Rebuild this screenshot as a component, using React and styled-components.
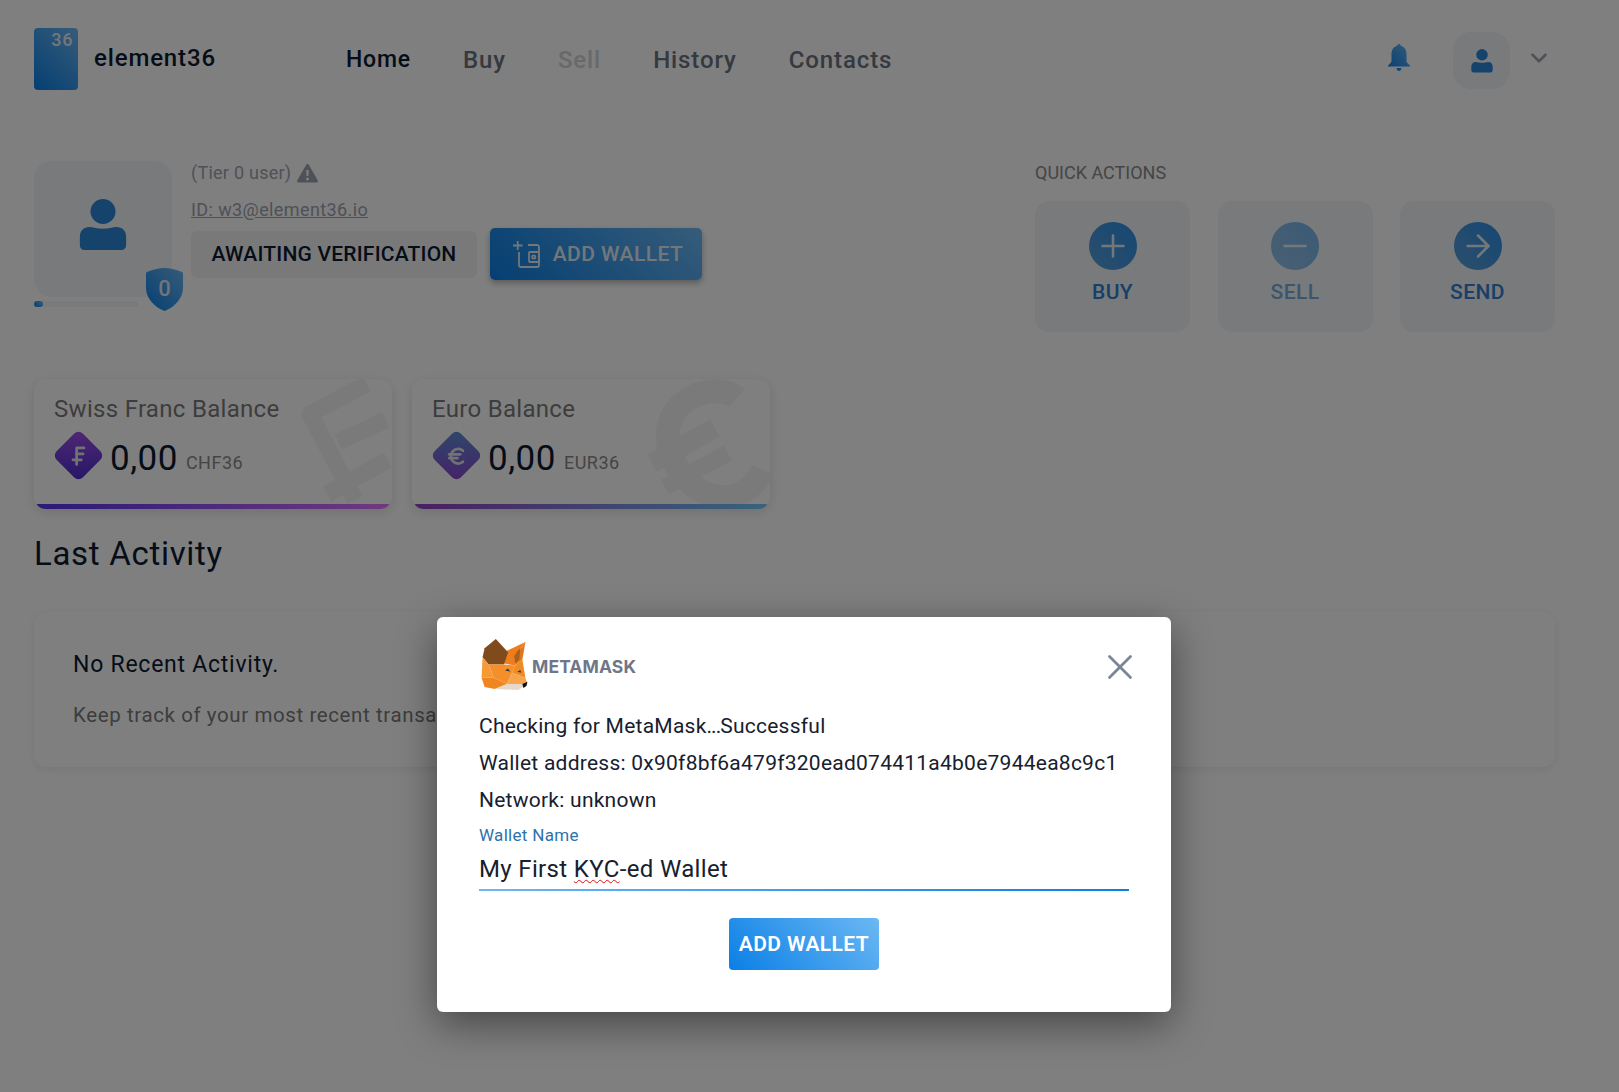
import React from "react";
import styled, {createGlobalStyle} from "styled-components";
import {Plus, Minus, ArrowRight, ChevronDown, SwissFranc, Euro, X} from "lucide-react";

const GlobalStyle = createGlobalStyle`
  html, body {
    margin: 0;
    padding: 0;
    background: #fff;
    font-family: Roboto, "Noto Sans", sans-serif;
  }
  * { box-sizing: border-box; }
`

const primary = "linear-gradient(45deg, #0a7fe6 0%, #6cb8f3 100%)"
const tint = "#f0f5f8"

const Page = styled.div`
  position: relative;
  width: 1619px;
  height: 1092px;
  padding: 28px 64px 0 34px;
  overflow: hidden;
  color: #0b1a33;
`

const Header = styled.header`
  display: flex;
  align-items: flex-start;
  height: 131px;
`

const Brand = styled.div`
  display: flex;
  gap: 16px;
  width: 312px;
`

const LogoMark = styled.div`
  width: 44px;
  height: 62px;
  border-radius: 4px;
  background: ${primary};
  color: #e8eef3;
  font-size: 18px;
  font-weight: 500;
  letter-spacing: .6px;
  line-height: 14px;
  text-align: right;
  padding: 5px 5px 0 0;
`

const BrandName = styled.div`
  font-size: 24px;
  font-weight: 500;
  letter-spacing: .85px;
  line-height: 28px;
  margin-top: 16px;
`

const Nav = styled.nav`
  display: flex;
  gap: 52px;
  margin-top: 18px;
`

const NavItem = styled.a`
  font-size: ${p => p.$active ? "23px" : "24px"};
  line-height: 28px;
  font-weight: 500;
  letter-spacing: ${p => p.$active ? ".8px" : ".9px"};
  color: ${p => p.$active ? "#0b1a33" : p.$disabled ? "#cfd3d8" : "#6b7280"};
`

const HeaderRight = styled.div`
  margin-left: auto;
  display: flex;
  align-items: center;
  margin-top: 4px;
  margin-right: 3px;
`

const Bell = styled.svg`
  width: 26px;
  height: 28px;
  margin-right: 41px;
  margin-top: -6px;
`

const UserBox = styled.div`
  width: 57px;
  height: 57px;
  border-radius: 18px;
  background: ${tint};
  display: flex;
  align-items: center;
  justify-content: center;
  margin-right: 16px;
`

const Chevron = styled(ChevronDown)`
  color: #9ca3af;
  margin-top: -6px;
`

const ProfileRow = styled.section`
  display: flex;
  justify-content: space-between;
  height: 220px;
`

const Profile = styled.div`
  display: flex;
  gap: 19px;
`

const AvatarColumn = styled.div`
  position: relative;
  width: 138px;
  padding-top: 2px;
`

const AvatarCard = styled.div`
  width: 138px;
  height: 136px;
  border-radius: 18px;
  background: ${tint};
  display: flex;
  align-items: center;
  justify-content: center;
  padding-bottom: 8px;
`

const ProgressTrack = styled.div`
  width: 104px;
  height: 6px;
  margin-top: 4px;
  border-radius: 3px;
  background: ${tint};
`

const ProgressFill = styled.div`
  width: 9px;
  height: 6px;
  border-radius: 3px;
  background: ${primary};
`

const ShieldBadge = styled.div`
  position: absolute;
  left: 112px;
  top: 109px;
  width: 37px;
  height: 43px;
`

const ShieldNumber = styled.span`
  position: absolute;
  inset: 3px 0 0 0;
  text-align: center;
  color: #e4e8ec;
  font-size: 22px;
  font-weight: 500;
  line-height: 36px;
`

const ProfileInfo = styled.div`
  display: flex;
  flex-direction: column;
`

const TierLine = styled.div`
  display: flex;
  align-items: center;
  gap: 6px;
  font-size: 18px;
  line-height: 28px;
  letter-spacing: .25px;
  color: #9ca3af;
`

const UserId = styled.a`
  font-size: 18px;
  line-height: 24px;
  margin-top: 11px;
  letter-spacing: .4px;
  color: #9ca3af;
  text-decoration: underline;
`

const StatusRow = styled.div`
  display: flex;
  gap: 13px;
  align-items: center;
  margin-top: 6px;
`

const StatusChip = styled.div`
  width: 286px;
  height: 47px;
  border-radius: 6px;
  background: #f2f2f2;
  font-size: 21px;
  font-weight: 500;
  letter-spacing: .2px;
  line-height: 47px;
  text-align: center;
  color: #0b1a33;
`

const WalletButton = styled.button`
  width: 212px;
  height: 52px;
  border: 0;
  border-radius: 5px;
  padding: 0 0 0 4px;
  background: ${primary};
  box-shadow: 0 3px 6px rgba(0, 0, 0, .3);
  color: #e8eef3;
  font: 500 21px Roboto, sans-serif;
  letter-spacing: .45px;
  display: flex;
  align-items: center;
  justify-content: center;
  gap: 13px;
`

const QuickActions = styled.div`
  width: 520px;
`

const QuickTitle = styled.div`
  font-size: 18px;
  line-height: 28px;
  color: #8a8a8a;
  margin-bottom: 14px;
`

const ActionGrid = styled.div`
  display: grid;
  grid-template-columns: repeat(3, 155px);
  justify-content: space-between;
`

const ActionCard = styled.div`
  height: 131px;
  border-radius: 14px;
  background: ${tint};
  display: flex;
  flex-direction: column;
  align-items: center;
  padding-top: 21px;
`

const ActionCircle = styled.div`
  width: 48px;
  height: 48px;
  border-radius: 50%;
  background: linear-gradient(225deg, #2a8ee6, #5a9fd8);
  color: #e8eef3;
  display: flex;
  align-items: center;
  justify-content: center;
  opacity: ${p => p.$disabled ? .62 : 1};
`

const ActionLabel = styled.div`
  margin-top: 9px;
  font-size: 21px;
  line-height: 26px;
  font-weight: 500;
  letter-spacing: .4px;
  color: #2f7fd0;
  opacity: ${p => p.$disabled ? .62 : 1};
`

const BalanceRow = styled.section`
  display: flex;
  gap: 20px;
`

const BalanceCard = styled.div`
  position: relative;
  width: 358px;
  height: 130px;
  border-radius: 12px;
  background: #fff;
  box-shadow: 0 3px 12px rgba(0, 0, 0, .12);
  overflow: hidden;
  padding: 16px 20px;
`

const Watermark = styled.svg`
  position: absolute;
  left: ${p => p.$left}px;
  top: -9px;
  width: 140px;
  height: 150px;
  fill: none;
  stroke: #f5f5f6;
  stroke-linejoin: round;
`

const BalanceTitle = styled.div`
  position: relative;
  font-size: 24px;
  line-height: 28px;
  letter-spacing: .3px;
  color: #7b7b7b;
`

const BalanceValue = styled.div`
  position: relative;
  display: flex;
  align-items: center;
  gap: 8px;
  margin-top: 8px;
  height: 48px;
`

const Diamond = styled.div`
  width: 37px;
  height: 37px;
  margin: 0 5.500px;
  flex-shrink: 0;
  display: flex;
  align-items: center;
  justify-content: center;
  border-radius: 6px;
  transform: rotate(45deg);
  background: ${p => p.$gradient};
  color: #e4e4e8;
`

const DiamondIcon = styled.span`
  display: flex;
  transform: rotate(-45deg);
`

const Amount = styled.span`
  font-size: 35px;
  padding-top: 6px;
  color: #0b1a33;
  letter-spacing: .5px;
`

const Currency = styled.span`
  font-size: 18px;
  margin-top: 15px;
  letter-spacing: .5px;
  color: #8a8a8a;
`

const BottomBar = styled.div`
  position: absolute;
  left: 3px;
  right: 3px;
  bottom: 0;
  height: 5px;
  border-radius: 0 0 6px 6px;
  background: ${p => p.$gradient};
`

const SectionTitle = styled.h2`
  margin: 25px 0 0;
  font-size: 33px;
  line-height: 40px;
  font-weight: 400;
  letter-spacing: .7px;
  color: #0b1a33;
`

const ActivityPanel = styled.section`
  margin-top: 38px;
  height: 155px;
  border-radius: 12px;
  background: #fff;
  box-shadow: 0 2px 8px rgba(0, 0, 0, .08);
  padding: 39px 39px;
`

const ActivityTitle = styled.div`
  font-size: 23px;
  line-height: 28px;
  letter-spacing: .75px;
`

const ActivityText = styled.div`
  font-size: 20.500px;
  line-height: 28px;
  margin-top: 22px;
  letter-spacing: .6px;
  color: #7b7b7b;
`

const Backdrop = styled.div`
  position: absolute;
  inset: 0;
  background: rgba(0, 0, 0, .5);
  padding: 617px 0 0 437px;
`

const Modal = styled.div`
  width: 734px;
  height: 395px;
  border-radius: 6px;
  background: #fff;
  box-shadow: 0 12px 40px rgba(0, 0, 0, .45);
  padding: 22px 42px 0;
`

const ModalHead = styled.div`
  display: flex;
  align-items: center;
  justify-content: space-between;
  height: 50px;
  margin-bottom: 19px;
`

const MetaBrand = styled.div`
  display: flex;
  align-items: center;
  gap: 4px;
  margin-left: 2px;
`

const MetaName = styled.span`
  font-family: Inter, sans-serif;
  font-size: 17.500px;
  font-weight: 700;
  letter-spacing: .1px;
  margin-top: 4px;
  color: #6f7689;
`

const CloseIcon = styled(X)`
  color: #7c8595;
  margin: 6px -12px 0 0;
`

const ModalLine = styled.div`
  font-size: 21px;
  line-height: 37px;
  letter-spacing: .25px;
  color: #16202e;
`

const TightDots = styled.span`
  letter-spacing: -1px;
`

const FieldLabel = styled.div`
  margin-top: 4px;
  font-size: 17px;
  line-height: 24px;
  letter-spacing: .3px;
  color: #2d72ad;
`

const FieldValue = styled.div`
  width: 650px;
  height: 44px;
  border-bottom: 2px solid;
  border-image: linear-gradient(90deg, #6cb8f3, #0a7fe6) 1;
  font-size: 24px;
  line-height: 44px;
  letter-spacing: .35px;
  color: #16202e;
`

const Squiggle = styled.span`
  text-decoration: underline wavy #e01010 1px;
  text-underline-offset: 2px;
`

const ModalButton = styled.button`
  display: block;
  width: 150px;
  height: 52px;
  margin: 27px 0 0 250px;
  border: 0;
  border-radius: 4px;
  background: ${primary};
  color: #fff;
  font: 600 21px Roboto, sans-serif;
  letter-spacing: .4px;
  padding: 0;
`

const UserIcon = ({size}) => (
  <svg width={size} height={size} viewBox="0 0 48 54" fill="#2a86d8">
    <circle cx="24" cy="13" r="13"/>
    <path d="M10 29c4 0 8 2 14 2s10-2 14-2c6 0 10 4 10 10v9c0 3-2 5-5 5H5c-3 0-5-2-5-5v-9c0-6 4-10 10-10z"/>
  </svg>
)

const WalletIcon = () => (
  <svg width="27" height="27" viewBox="0 0 27 27" fill="none" stroke="#e8eef3" strokeWidth="1.800">
    <path d="M0 4.500h9.500M4.700 0v9"/>
    <path d="M6 11v13a2 2 0 0 0 2 2h16a2 2 0 0 0 2-2V6a2 2 0 0 0-2-2h-9"/>
    <rect x="16" y="11" width="10" height="10" rx="1"/>
    <circle cx="20.700" cy="16" r="1.600"/>
  </svg>
)

const Fox = () => (
  <svg width="47" height="51" viewBox="0 0 45 50">
    <polygon points="24,12 43,3 36,13 33,26 22,24" fill="#ee7d1c"/>
    <polygon points="14,0 3,9 1,18 7,25 22,25 26,13" fill="#7f4a1c"/>
    <polygon points="43,3 40,20 33,26 36,13" fill="#e2761e"/>
    <polygon points="35,12 38,9 37,20 33,24 32,17" fill="#a8601f"/>
    <polygon points="40,20 43,38 30,33 33,26" fill="#f28a22"/>
    <polygon points="22,25 33,26 30,33 25,44 12,38 7,25" fill="#f58f2a"/>
    <polygon points="1,18 7,25 12,38 0,38" fill="#f59a36"/>
    <polygon points="0,38 12,38 25,44 13,49 3,47" fill="#ef8620"/>
    <polygon points="30,33 43,38 45,44 25,44" fill="#f7a44c"/>
    <polygon points="25,44 45,44 36,50 13,49" fill="#e6d8ca"/>
    <polygon points="23,31 26,29 28,32" fill="#2f3a4a"/>
    <polygon points="35,32 38,30.500 39,33" fill="#2f3a4a"/>
    <polygon points="40,44 45,42 44,46 41,48" fill="#111"/>
  </svg>
)

const Warning = () => (
  <svg width="21" height="19" viewBox="0 0 21 19">
    <path fill="#9ca3af" fillRule="evenodd" d="M10.500 0c.6 0 1 .3 1.300.8l9 15.600c.5 1-.2 2.200-1.300 2.200h-18c-1.100 0-1.800-1.200-1.300-2.200l9-15.600c.3-.5.700-.8 1.300-.8zM9.300 6l.3 6h1.800l.3-6zm1.200 7.500a1.500 1.500 0 1 0 0 3 1.500 1.500 0 0 0 0-3z"/>
  </svg>
)

const FrancMark = () => (
  <Watermark $left={236} viewBox="0 0 140 150" strokeWidth="17">
    <path d="M97 14 40 44l45 86"/>
    <path d="M68 72l48-22"/>
    <path d="M57 124l61-34"/>
  </Watermark>
)

const EuroMark = () => (
  <Watermark $left={228} viewBox="0 0 140 150" strokeWidth="24">
    <path d="M97 28C80 13 33 23 28 60c-3 30 22 68 59 67 16-1 30-14 36-27"/>
    <path d="M12 93l63-35" strokeWidth="20"/>
    <path d="M25 117l63-34" strokeWidth="17"/>
  </Watermark>
)

const balances = [
  {
    title: "Swiss Franc Balance",
    amount: "0,00",
    code: "CHF36",
    Icon: SwissFranc,
    Mark: FrancMark,
    diamond: "linear-gradient(-45deg, #4a2cd0, #a050e8)",
    bar: "linear-gradient(90deg, #5634f0, #e074fe)"
  },
  {
    title: "Euro Balance",
    amount: "0,00",
    code: "EUR36",
    Icon: Euro,
    Mark: EuroMark,
    diamond: "linear-gradient(-45deg, #8a44d0, #5c90d8)",
    bar: "linear-gradient(90deg, #9440c0, #70c8f8)"
  }
]

const actions = [
  {label: "BUY", Icon: Plus},
  {label: "SELL", Icon: Minus, disabled: true},
  {label: "SEND", Icon: ArrowRight}
]

export default function App() {
  return (
    <>
      <GlobalStyle/>
      <Page>
        <Header>
          <Brand>
            <LogoMark>36</LogoMark>
            <BrandName>element36</BrandName>
          </Brand>
          <Nav>
            <NavItem $active>Home</NavItem>
            <NavItem>Buy</NavItem>
            <NavItem $disabled>Sell</NavItem>
            <NavItem>History</NavItem>
            <NavItem>Contacts</NavItem>
          </Nav>
          <HeaderRight>
            <Bell viewBox="0 0 26 28">
              <defs>
                <linearGradient id="bell" x1="0" y1="1" x2="1" y2="0">
                  <stop offset="0" stopColor="#0a7fe6"/>
                  <stop offset="1" stopColor="#6cb8f3"/>
                </linearGradient>
              </defs>
              <path fill="url(#bell)" d="M13 0c1 0 1.700.7 1.800 1.800C18.500 3 20.500 6 20.500 10v7c0 1.500 2 3 3.500 4.500v1H2v-1C3.500 20 5.500 18.500 5.500 17v-7c0-4 2-7 5.700-8.200C11.300.7 12 0 13 0zM10.500 24h5c0 1.500-1 3-2.500 3s-2.500-1.500-2.500-3z"/>
            </Bell>
            <UserBox><UserIcon size={24}/></UserBox>
            <Chevron size={26} strokeWidth={2.4}/>
          </HeaderRight>
        </Header>

        <ProfileRow>
          <Profile>
            <AvatarColumn>
              <AvatarCard><UserIcon size={52}/></AvatarCard>
              <ProgressTrack><ProgressFill/></ProgressTrack>
              <ShieldBadge>
                <svg width="37" height="43" viewBox="0 0 37 43">
                  <defs>
                    <linearGradient id="shield" x1="0" y1="1" x2="1" y2="0">
                      <stop offset="0" stopColor="#0a7fe6"/>
                      <stop offset="1" stopColor="#6cb8f3"/>
                    </linearGradient>
                  </defs>
                  <path fill="url(#shield)" d="M18.500 0C24 0 31 2 36 4c.700.300 1 .800 1 1.500V20c0 10-8 19-18.500 23C8 39 0 30 0 20V5.500C0 4.800.300 4.300 1 4 6 2 13 0 18.500 0z"/>
                </svg>
                <ShieldNumber>0</ShieldNumber>
              </ShieldBadge>
            </AvatarColumn>
            <ProfileInfo>
              <TierLine>(Tier 0 user) <Warning/></TierLine>
              <UserId>ID: w3@element36.io</UserId>
              <StatusRow>
                <StatusChip>AWAITING VERIFICATION</StatusChip>
                <WalletButton><WalletIcon/>ADD WALLET</WalletButton>
              </StatusRow>
            </ProfileInfo>
          </Profile>
          <QuickActions>
            <QuickTitle>QUICK ACTIONS</QuickTitle>
            <ActionGrid>
              {actions.map(({label, Icon, disabled}) => (
                <ActionCard key={label}>
                  <ActionCircle $disabled={disabled}><Icon size={36} strokeWidth={1.7}/></ActionCircle>
                  <ActionLabel $disabled={disabled}>{label}</ActionLabel>
                </ActionCard>
              ))}
            </ActionGrid>
          </QuickActions>
        </ProfileRow>

        <BalanceRow>
          {balances.map(({title, amount, code, Icon, Mark, diamond, bar}) => (
            <BalanceCard key={code}>
              <Mark/>
              <BalanceTitle>{title}</BalanceTitle>
              <BalanceValue>
                <Diamond $gradient={diamond}>
                  <DiamondIcon><Icon size={22} strokeWidth={3}/></DiamondIcon>
                </Diamond>
                <Amount>{amount}</Amount>
                <Currency>{code}</Currency>
              </BalanceValue>
              <BottomBar $gradient={bar}/>
            </BalanceCard>
          ))}
        </BalanceRow>

        <SectionTitle>Last Activity</SectionTitle>
        <ActivityPanel>
          <ActivityTitle>No Recent Activity.</ActivityTitle>
          <ActivityText>Keep track of your most recent transactions here.</ActivityText>
        </ActivityPanel>

        <Backdrop>
          <Modal>
            <ModalHead>
              <MetaBrand><Fox/><MetaName>METAMASK</MetaName></MetaBrand>
              <CloseIcon size={42} strokeWidth={1.6}/>
            </ModalHead>
            <ModalLine>Checking for MetaMask<TightDots>...</TightDots>Successful</ModalLine>
            <ModalLine>Wallet address: 0x90f8bf6a479f320ead074411a4b0e7944ea8c9c1</ModalLine>
            <ModalLine>Network: unknown</ModalLine>
            <FieldLabel>Wallet Name</FieldLabel>
            <FieldValue>My First <Squiggle>KYC</Squiggle>-ed Wallet</FieldValue>
            <ModalButton>ADD WALLET</ModalButton>
          </Modal>
        </Backdrop>
      </Page>
    </>
  )
}
